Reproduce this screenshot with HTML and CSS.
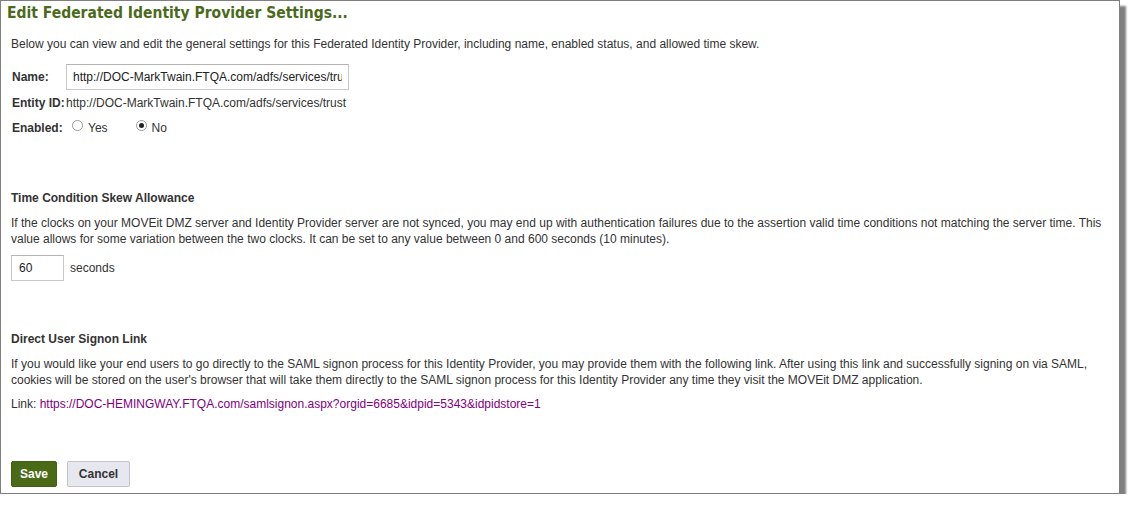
FILE: index.html
```html
<!DOCTYPE html>
<html lang="en">

<head>
  <meta charset="UTF-8" />
  <meta name="viewport" content="width=device-width, initial-scale=1.0" />
  <title>Edit Federated Identity Provider Settings</title>
  <link rel="stylesheet" href="styles.css">
</head>

<body>
  <!-- Settings panel -->
  <div class="panel">
    <h1 class="title">Edit Federated Identity Provider Settings...</h1>

    <div class="content">
      <p class="intro">Below you can view and edit the general settings for this Federated Identity Provider, including name, enabled status, and allowed time skew.</p>

      <!-- General settings -->
      <div class="form-grid">
        <label class="label" for="idpName">Name:</label>
        <div class="value"><input type="text" id="idpName" class="text-input name-input" value="http://DOC-MarkTwain.FTQA.com/adfs/services/trust" /></div>

        <span class="label">Entity ID:</span>
        <span class="value">http://DOC-MarkTwain.FTQA.com/adfs/services/trust</span>

        <span class="label">Enabled:</span>
        <div class="value radios">
          <label class="radio"><input type="radio" name="enabled" value="yes" /> Yes</label>
          <label class="radio"><input type="radio" name="enabled" value="no" checked /> No</label>
        </div>
      </div>

      <!-- Time skew -->
      <h3 class="section-title">Time Condition Skew Allowance</h3>
      <p class="section-text">If the clocks on your MOVEit DMZ server and Identity Provider server are not synced, you may end up with authentication failures due to the assertion valid time conditions not matching the server time. This value allows for some variation between the two clocks. It can be set to any value between 0 and 600 seconds (10 minutes).</p>
      <div class="skew-row">
        <input type="text" class="text-input skew-input" value="60" />
        <span>seconds</span>
      </div>

      <!-- Signon link -->
      <h3 class="section-title">Direct User Signon Link</h3>
      <p class="section-text">If you would like your end users to go directly to the SAML signon process for this Identity Provider, you may provide them with the following link. After using this link and successfully signing on via SAML, cookies will be stored on the user's browser that will take them directly to the SAML signon process for this Identity Provider any time they visit the MOVEit DMZ application.</p>
      <p class="link-line">Link: <a href="#">https://DOC-HEMINGWAY.FTQA.com/samlsignon.aspx?orgid=6685&amp;idpid=5343&amp;idpidstore=1</a></p>

      <div class="buttons">
        <button class="btn btn-save">Save</button>
        <button class="btn btn-cancel">Cancel</button>
      </div>
    </div>
  </div>
</body>

</html>
```

FILE: styles.css
```css
body {
  margin: 0;
  background: #fff;
  font-family: "Liberation Sans", Arial, sans-serif;
  font-size: 12px;
  line-height: 16px;
  color: #333;
}

.panel {
  width: 1120px;
  height: 494px;
  box-sizing: border-box;
  border: 1px solid #7f7f7f;
  box-shadow: 6px 6px 2px rgba(0, 0, 0, 0.5);
  background: #fff;
}

.title {
  margin: 0;
  padding: 2px 6px 0;
  font-family: "DejaVu Sans Condensed", "DejaVu Sans", Verdana, sans-serif;
  font-size: 15.5px;
  line-height: 21px;
  font-weight: bold;
  color: #4b6a1b;
}

.content {
  padding: 0 10px;
}

.intro {
  margin: 12px 0 12px;
}

/* label / value table */
.form-grid {
  display: grid;
  grid-template-columns: 54px 1fr;
  grid-template-rows: 26px 25px 25px;
  padding-left: 1px;
  align-items: center;
}

.label {
  font-weight: bold;
  white-space: nowrap;
}

.text-input {
  font-family: "Liberation Sans", Arial, sans-serif;
  font-size: 12px;
  color: #222;
  height: 26px;
  box-sizing: border-box;
  border: 1px solid #c8c8c8;
  border-top-color: #b4b4b4;
  margin: 0;
  outline: none;
}

.name-input {
  width: 283px;
  padding: 0 6px;
}

.radios {
  display: flex;
  gap: 28px;
  padding-left: 6px;
}

.radio {
  display: flex;
  align-items: center;
  gap: 5px;
}

.radio input {
  appearance: none;
  width: 11px;
  height: 11px;
  margin: 0;
  border: 1px solid #9a9a9a;
  border-radius: 50%;
  background: #fff;
  position: relative;
  top: -2px;
}

.radio input:checked::after {
  content: "";
  position: absolute;
  left: 2px;
  top: 2px;
  width: 5px;
  height: 5px;
  border-radius: 50%;
  background: #222;
}

.section-title {
  margin: 50px 0 9px;
  font-size: 12px;
  line-height: 16px;
  font-weight: bold;
}

.section-text {
  margin: 0;
}

.skew-row {
  display: flex;
  align-items: center;
  gap: 6px;
  margin-top: 8px;
}

.skew-input {
  width: 53px;
  padding: 0 7px;
}

.link-line {
  margin: 8px 0 0;
}

a {
  color: #800080;
  text-decoration: none;
}

.buttons {
  display: flex;
  gap: 10px;
  margin-top: 49px;
}

.btn {
  height: 26px;
  font-family: "Liberation Sans", Arial, sans-serif;
  font-size: 12px;
  font-weight: bold;
  border-radius: 2px;
  cursor: pointer;
  margin: 0;
}

.btn-save {
  width: 46px;
  background: #4b6a17;
  color: #fff;
  border: 1px solid #445f15;
}

.btn-cancel {
  width: 63px;
  background: #e6e7ef;
  color: #333;
  border: 1px solid #c4c4c8;
}
```
